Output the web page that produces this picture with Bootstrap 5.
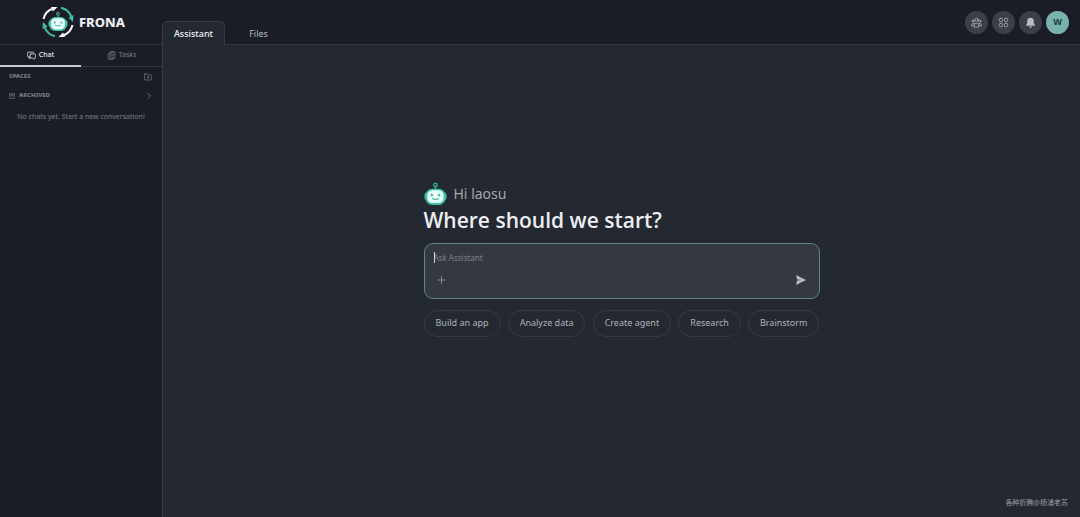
<!DOCTYPE html>
<html lang="en" data-bs-theme="dark">
<head>
<meta charset="utf-8">
<meta name="viewport" content="width=device-width, initial-scale=1">
<title>Frona</title>
<link href="https://cdn.jsdelivr.net/npm/bootstrap@5.3.0/dist/css/bootstrap.min.css" rel="stylesheet">
<style>
:root{--side:#1a1d25;--main:#232831;--line:#343942;--muted:#7a7e86}
body{background:var(--main);font-family:"Noto Sans","Noto Sans CJK SC",sans-serif;color:#e8eaef;font-size:9px}
button{background:none;border:0;padding:0;color:inherit}
svg{display:block;flex:none}
.line-icon{fill:none;stroke:currentColor;stroke-linecap:round;stroke-linejoin:round}
.topbar{background:var(--side);height:45px;border-bottom:1px solid var(--line)}
.brand{width:162px;padding-left:4px;color:#eceef2;font:800 13px/24px "Noto Sans",sans-serif}
.brand:hover{color:#eceef2}
.page-tabs{gap:2px}
.page-tab{height:23px;width:63px;font-size:9px;line-height:23px;color:#b6b9bf;border:1px solid transparent;border-bottom:0;border-radius:5px 5px 0 0}
.page-tab.active{height:24px;margin-bottom:-1px;background:var(--main);border-color:var(--line);color:#f0f1f4;font-weight:500}
.actions{padding-right:11px}
.round-btn{width:23px;height:23px;border-radius:50%;background:#3b3f48;color:#a4a7ae}
.avatar{background:#78b1ae;color:#203a40;font-weight:700;font-size:9px}
.sidebar{width:163px;background:var(--side);border-right:1px solid var(--line);color:var(--muted)}
.side-tabs{height:22px;border-bottom:1px solid var(--line)}
.side-tab{font-size:7px;gap:3px;height:22px;border-bottom:1px solid transparent}
.side-tab.active{color:#e6e8ec;border-bottom:2px solid #c5c8cd;font-weight:500}
.section-row{height:19px;padding:0 10px 0 9px;font-size:6px;font-weight:800}
.empty-note{font-size:7px;line-height:10px;margin-top:7px}
.start{width:396px;padding-bottom:20px}
.greeting{gap:7px;font-size:14px;line-height:20px;color:#a3a6ad}
.headline{font:600 21px/29px "Open Sans",sans-serif;color:#eceef3}
.ask-box{height:56px;background:#343841;border:1px solid #5e8589;border-radius:9px;padding:8px 9px}
.ask-input{display:block;width:100%;height:12px;background:none;border:0;outline:0;padding:0;color:#e8eaef;font-size:8px;line-height:12px}
.ask-input::placeholder{color:#7d8189;opacity:1}
.ask-tools{margin-top:10px;padding:0 4px 0 3px}
.plus{color:#858990}
.caret{left:0;top:0;width:1px;height:11px;background:#d5d7dc}
.suggestions{padding-top:3px}
.pill{height:27px;padding:0 11px;border:1px solid #353a43;border-radius:14px;font-size:9px;color:#b0b3b9;white-space:nowrap}
.credit{right:12px;bottom:8px;font:7px/14px "Noto Sans CJK SC",sans-serif;color:#9b9ea5}
</style>
</head>
<body class="vh-100 d-flex flex-column overflow-hidden">
<svg width="0" height="0" class="position-absolute" aria-hidden="true">
  <symbol id="robot" viewBox="0 0 24 24">
    <path d="M12 7V4" stroke="#3ebfa4" stroke-width="1.3"/>
    <circle cx="12" cy="2.6" r="1.8" fill="#20363d" stroke="#3ebfa4" stroke-width="1.2"/>
    <rect x=".5" y="10.500" width="23" height="8" rx="3" fill="#3ebfa4"/>
    <rect x="1.500" y="6.500" width="21" height="17" rx="7" fill="#3ebfa4"/>
    <rect x="3.500" y="8" width="17" height="13.500" rx="5.500" fill="#e9fff9"/>
    <path d="M7.300 12.200l1.800 1-1.800 1M16.700 12.200l-1.800 1 1.800 1M9 16.500q3 2.400 6 0" fill="none" stroke="#35a993" stroke-width="1.100" stroke-linecap="round"/>
  </symbol>
</svg>

<header class="topbar d-flex flex-shrink-0">
  <a href="#" class="brand d-flex align-items-center justify-content-center text-decoration-none flex-shrink-0">
    <svg class="me-1" width="34" height="34" viewBox="0 0 34 34" fill="none" aria-hidden="true">
      <path d="M2.500 14A14.500 14.500 0 0 1 12 3.500" stroke="#f4f6f7" stroke-width="2"/>
      <path d="M10 2l6.500 0-4.500 4.600z" fill="#f4f6f7"/>
      <path d="M20 2.800A14.500 14.500 0 0 1 30.500 12" stroke="#3ebfa4" stroke-width="2"/>
      <path d="M32.500 10l-.5 7-4.500-4.500z" fill="#3ebfa4"/>
      <path d="M31.500 20A14.500 14.500 0 0 1 22 30.500" stroke="#f4f6f7" stroke-width="2"/>
      <path d="M24 32h-6.500l4.500-4.600z" fill="#f4f6f7"/>
      <path d="M14 31.200A14.500 14.500 0 0 1 3.500 22" stroke="#3ebfa4" stroke-width="2"/>
      <path d="M1.500 24l.5-7 4.500 4.500z" fill="#3ebfa4"/>
      <use href="#robot" x="7" y="6" width="20" height="21"/>
    </svg>
    <span>FRONA</span>
  </a>
  <nav class="page-tabs d-flex align-items-end" aria-label="Pages">
    <button class="page-tab active">Assistant</button>
    <button class="page-tab">Files</button>
  </nav>
  <div class="actions d-flex align-items-center gap-1 ms-auto">
    <button class="round-btn d-flex align-items-center justify-content-center" aria-label="Team">
      <svg class="line-icon" width="11" height="11" viewBox="0 0 24 24" stroke-width="2"><circle cx="12" cy="6" r="3.500"/><circle cx="5" cy="9" r="2.500"/><circle cx="19" cy="9" r="2.500"/><path d="M6.500 21v-2a5.500 5.500 0 0 1 11 0v2zM6 14c-3 0-5 2-5 5h5M18 14c3 0 5 2 5 5h-5"/></svg>
    </button>
    <button class="round-btn d-flex align-items-center justify-content-center" aria-label="Apps">
      <svg class="line-icon" width="11" height="11" viewBox="0 0 24 24" stroke-width="2"><rect x="3" y="3" width="7" height="7" rx="2"/><rect x="14" y="3" width="7" height="7" rx="2"/><rect x="3" y="14" width="7" height="7" rx="2"/><rect x="14" y="14" width="7" height="7" rx="2"/></svg>
    </button>
    <button class="round-btn d-flex align-items-center justify-content-center" aria-label="Notifications">
      <svg width="11" height="11" viewBox="0 0 24 24" fill="#b9bcc2"><path d="M12 1.500a7 7 0 0 0-7 7V13l-2.500 4.500V19h19v-1.500L19 13V8.500a7 7 0 0 0-7-7zM8.500 20.500a3.500 3 0 0 0 7 0z"/></svg>
    </button>
    <button class="round-btn avatar" aria-label="Account">W</button>
  </div>
</header>

<div class="d-flex flex-grow-1">
  <aside class="sidebar flex-shrink-0">
    <div class="side-tabs d-flex">
      <button class="side-tab active w-50 d-flex align-items-center justify-content-center">
        <svg class="line-icon" width="9" height="9" viewBox="0 0 24 24" stroke-width="2"><path d="M6 16H3a2 2 0 0 1-2-2V5a2 2 0 0 1 2-2h13a2 2 0 0 1 2 2M6 16v4l4-3"/><path d="M10 8h11a2 2 0 0 1 2 2v7a2 2 0 0 1-2 2h-2v3l-4-3h-5a2 2 0 0 1-2-2v-7a2 2 0 0 1 2-2z"/></svg>Chat
      </button>
      <button class="side-tab w-50 d-flex align-items-center justify-content-center">
        <svg class="line-icon" width="9" height="9" viewBox="0 0 24 24" stroke-width="2"><path d="M8 7H4a1 1 0 0 0-1 1v14h13v-3M9 3h12v16H8V3zM12 3V1h5v2M12 9h5M12 13h5"/></svg>Tasks
      </button>
    </div>
    <div class="section-row d-flex align-items-center justify-content-between">
      <span>SPACES</span>
      <button aria-label="New space"><svg class="line-icon" width="8" height="8" viewBox="0 0 24 24" stroke-width="2"><path d="M3 3h6l3 3h9a2 2 0 0 1 2 2v11a2 2 0 0 1-2 2H3a2 2 0 0 1-2-2V5a2 2 0 0 1 2-2zM12 10v6M9 13h6"/></svg></button>
    </div>
    <button class="section-row w-100 d-flex align-items-center gap-1">
      <svg class="line-icon" width="6" height="6" viewBox="0 0 24 24" stroke-width="2.500"><path d="M1 3h22v5H1zM3 8v14h18V8M9 12h6"/></svg>
      <span>ARCHIVED</span>
      <svg class="line-icon ms-auto" width="5" height="8" viewBox="0 0 10 16" stroke-width="1.800"><path d="M2 3l5 5-5 5"/></svg>
    </button>
    <p class="empty-note text-center mb-0">No chats yet. Start a new conversation!</p>
  </aside>

  <main class="flex-grow-1 d-flex align-items-center justify-content-center">
    <section class="start mb-4">
      <div class="greeting d-flex align-items-center">
        <svg width="23" height="24" aria-hidden="true"><use href="#robot" width="23" height="24"/></svg>
        <span>Hi laosu</span>
      </div>
      <h1 class="headline mb-2 text-nowrap">Where should we start?</h1>
      <form class="ask-box mb-2">
        <div class="position-relative">
          <input class="ask-input" type="text" placeholder="Ask Assistant" aria-label="Ask Assistant">
          <span class="caret position-absolute"></span>
        </div>
        <div class="ask-tools d-flex justify-content-between align-items-center">
          <button type="button" class="plus" aria-label="Add attachment"><svg class="line-icon" width="9" height="12" viewBox="0 0 9 12"><path d="M4.500 2.500v7M1 6h7"/></svg></button>
          <button type="submit" aria-label="Send"><svg width="10" height="12" viewBox="0 0 10 12" fill="#b9bcc3"><path d="M0 1l10 5-10 5 1.200-4.400L6 6 1.200 5.400z"/></svg></button>
        </div>
      </form>
      <div class="suggestions d-flex justify-content-between">
        <button class="pill">Build an app</button>
        <button class="pill">Analyze data</button>
        <button class="pill">Create agent</button>
        <button class="pill">Research</button>
        <button class="pill">Brainstorm</button>
      </div>
    </section>
  </main>
</div>
<div class="credit position-absolute">各种折腾@杨浦老苏</div>
<script src="https://cdn.jsdelivr.net/npm/bootstrap@5.3.0/dist/js/bootstrap.bundle.min.js"></script>
</body>
</html>
